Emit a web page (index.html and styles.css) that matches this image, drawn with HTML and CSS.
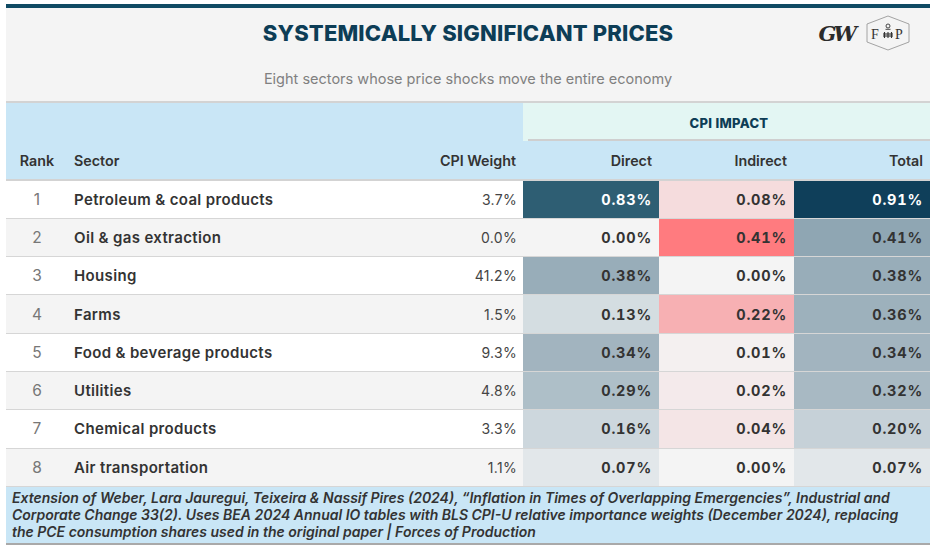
FILE: index.html
```html
<!DOCTYPE html>
<html lang="en">
<head>
<meta charset="utf-8">
<title>Systemically Significant Prices</title>
<link rel="stylesheet" href="styles.css">
</head>
<body>
<div class="card">
  <header class="head">
    <div class="head-row">
      <div class="spacer"></div>
      <h1 class="title">SYSTEMICALLY SIGNIFICANT PRICES</h1>
      <div class="logos">
        <span class="gw">GW</span>
        <svg class="fp" width="44" height="36" viewBox="0 0 44 36" aria-label="Forces of Production">
          <polygon points="22,1 43,9 43,27 22,35 1,27 1,9" fill="none" stroke="#9a9a9a" stroke-width="0.9"/>
          <text x="5" y="24" class="fp-letter">F</text>
          <text x="29" y="24" class="fp-letter">P</text>
          <circle cx="22" cy="11" r="2" fill="none" stroke="#333" stroke-width="0.9"/>
          <line x1="19.5" y1="14.3" x2="24.5" y2="14.3" stroke="#333" stroke-width="0.9"/>
          <g stroke="#333" stroke-width="1.1">
            <line x1="18.5" y1="17" x2="18.5" y2="23"/>
            <line x1="22" y1="17" x2="22" y2="23"/>
            <line x1="25.5" y1="17" x2="25.5" y2="23"/>
            <line x1="17" y1="19" x2="27" y2="19"/>
            <line x1="17" y1="21" x2="27" y2="21"/>
          </g>
        </svg>
      </div>
    </div>
    <p class="subtitle">Eight sectors whose price shocks move the entire economy</p>
  </header>

  <table class="tbl">
    <colgroup>
      <col class="c-rank"><col class="c-sector"><col class="c-weight">
      <col class="c-val"><col class="c-val2"><col class="c-val">
    </colgroup>
    <thead>
      <tr class="spanner-row">
        <th colspan="3" class="blank"></th>
        <th colspan="3" class="spanner"><div class="spanner-label">CPI IMPACT</div></th>
      </tr>
      <tr class="labels">
        <th class="rank">Rank</th>
        <th class="sector">Sector</th>
        <th class="num">CPI Weight</th>
        <th class="num">Direct</th>
        <th class="num">Indirect</th>
        <th class="num">Total</th>
      </tr>
    </thead>
    <tbody>
      <tr>
        <td class="rank">1</td><td class="sector">Petroleum &amp; coal products</td><td class="weight">3.7%</td>
        <td class="val light" style="background:#2e5e73">0.83%</td>
        <td class="val" style="background:#f5dcdd">0.08%</td>
        <td class="val light" style="background:#0f3f5a">0.91%</td>
      </tr>
      <tr class="alt">
        <td class="rank">2</td><td class="sector">Oil &amp; gas extraction</td><td class="weight">0.0%</td>
        <td class="val">0.00%</td>
        <td class="val" style="background:#ff7b7f">0.41%</td>
        <td class="val" style="background:#8fa6b3">0.41%</td>
      </tr>
      <tr>
        <td class="rank">3</td><td class="sector">Housing</td><td class="weight">41.2%</td>
        <td class="val" style="background:#98adb9">0.38%</td>
        <td class="val" style="background:#f4f4f4">0.00%</td>
        <td class="val" style="background:#98adb9">0.38%</td>
      </tr>
      <tr class="alt">
        <td class="rank">4</td><td class="sector">Farms</td><td class="weight">1.5%</td>
        <td class="val" style="background:#d4dde1">0.13%</td>
        <td class="val" style="background:#f7b0b3">0.22%</td>
        <td class="val" style="background:#9db1bc">0.36%</td>
      </tr>
      <tr>
        <td class="rank">5</td><td class="sector">Food &amp; beverage products</td><td class="weight">9.3%</td>
        <td class="val" style="background:#a2b4bf">0.34%</td>
        <td class="val" style="background:#f4f0f0">0.01%</td>
        <td class="val" style="background:#a2b4bf">0.34%</td>
      </tr>
      <tr class="alt">
        <td class="rank">6</td><td class="sector">Utilities</td><td class="weight">4.8%</td>
        <td class="val" style="background:#aebfc8">0.29%</td>
        <td class="val" style="background:#f4eaeb">0.02%</td>
        <td class="val" style="background:#a8b9c3">0.32%</td>
      </tr>
      <tr>
        <td class="rank">7</td><td class="sector">Chemical products</td><td class="weight">3.3%</td>
        <td class="val" style="background:#cdd7dd">0.16%</td>
        <td class="val" style="background:#f4e5e6">0.04%</td>
        <td class="val" style="background:#c6d1d8">0.20%</td>
      </tr>
      <tr class="alt">
        <td class="rank">8</td><td class="sector">Air transportation</td><td class="weight">1.1%</td>
        <td class="val" style="background:#e2e7ea">0.07%</td>
        <td class="val">0.00%</td>
        <td class="val" style="background:#e2e7ea">0.07%</td>
      </tr>
    </tbody>
  </table>

  <footer class="foot">
    Extension of Weber, Lara Jauregui, Teixeira &amp; Nassif Pires (2024), “Inflation in Times of Overlapping Emergencies”, Industrial and Corporate Change 33(2). Uses BEA 2024 Annual IO tables with BLS CPI-U relative importance weights (December 2024), replacing the PCE consumption shares used in the original paper | Forces of Production
  </footer>
</div>
</body>
</html>
```

FILE: styles.css
```css
* { box-sizing: border-box; }

html, body {
  margin: 0;
  padding: 0;
  background: #ffffff;
}

body {
  font-family: Inter, "Noto Sans", "Liberation Sans", sans-serif;
  color: #333333;
}

.card {
  width: 924px;
  margin: 4px 0 0 6px;
  border-top: 4px solid #0f4a63;
}

.head {
  background: #f4f4f4;
  padding: 7px 20px 12px 20px;
}

.head-row {
  display: grid;
  grid-template-columns: 1fr auto 1fr;
  align-items: center;
  height: 36px;
}

.title {
  margin: 0;
  font-size: 22px;
  font-weight: 800;
  color: #0d3d56;
  letter-spacing: 0.15px;
  line-height: 28px;
}

.logos {
  display: flex;
  justify-content: flex-end;
  align-items: center;
  gap: 10px;
}

.gw {
  font-family: "DejaVu Serif", serif;
  font-weight: 700;
  font-style: italic;
  font-size: 21px;
  letter-spacing: -3px;
  color: #2b2b2b;
  padding-right: 2px;
}

.fp { display: block; }

.fp-letter {
  font-family: "Liberation Serif", "DejaVu Serif", serif;
  font-size: 14px;
  fill: #333333;
}

.subtitle {
  margin: 18px 0 0 0;
  text-align: center;
  font-size: 14.5px;
  line-height: 20px;
  color: #808080;
}

.tbl {
  width: 924px;
  border-collapse: collapse;
  table-layout: fixed;
  border-top: 2px solid #d3d3d3;
  font-size: 14px;
}

.c-rank { width: 62px; }
.c-sector { width: 362px; }
.c-weight { width: 93px; }
.c-val { width: 136px; }
.c-val2 { width: 135px; }

.spanner-row th {
  height: 38px;
  padding: 0;
}

.blank { background: #c9e6f6; }

.spanner {
  background: #c9e6f6;
  vertical-align: top;
}

.spanner-label {
  height: 38px;
  background: #e3f6f3;
  border-bottom: 2px solid #cfcfcf;
  box-shadow: -5px 0 0 #e3f6f3;
  margin-left: 5px;
  text-align: center;
  line-height: 40px;
  font-size: 13px;
  font-weight: 800;
  color: #0d3d56;
  letter-spacing: 0.3px;
}

.labels th {
  background: #c9e6f6;
  height: 39px;
  padding: 0 7px 0 0;
  font-weight: 600;
  font-size: 14.3px;
  color: #333333;
  border-bottom: 2px solid #d3d3d3;
}

.labels th.rank { text-align: center; padding: 0; }
.labels th.sector { text-align: left; padding-left: 6px; }
.labels th.num { text-align: right; }

tbody tr { background: #ffffff; }
tbody tr.alt { background: #f4f4f4; }

tbody td {
  height: 38.3px;
  padding: 0;
  border-bottom: 1px solid #d6d6d6;
  white-space: nowrap;
}

td.rank {
  text-align: center;
  padding-left: 0;
  color: #777777;
  font-size: 15.5px;
}

td.sector {
  padding-left: 6px;
  font-weight: 600;
  font-size: 15px;
  letter-spacing: 0.35px;
  color: #333333;
}

td.weight {
  text-align: right;
  padding-right: 6px;
  color: #444444;
  letter-spacing: 0.3px;
}

td.val {
  text-align: right;
  padding-right: 7px;
  font-weight: 700;
  font-size: 14.5px;
  letter-spacing: 0.8px;
  color: #333333;
  font-variant-numeric: tabular-nums;
}

td.val.light { color: #ffffff; }

.foot {
  background: #c9e6f6;
  border-bottom: 2px solid #a9a9a9;
  padding: 2px 10px 3px 6px;
  font-size: 14px;
  line-height: 17px;
  font-style: italic;
  font-weight: 600;
  color: #333333;
}
```
